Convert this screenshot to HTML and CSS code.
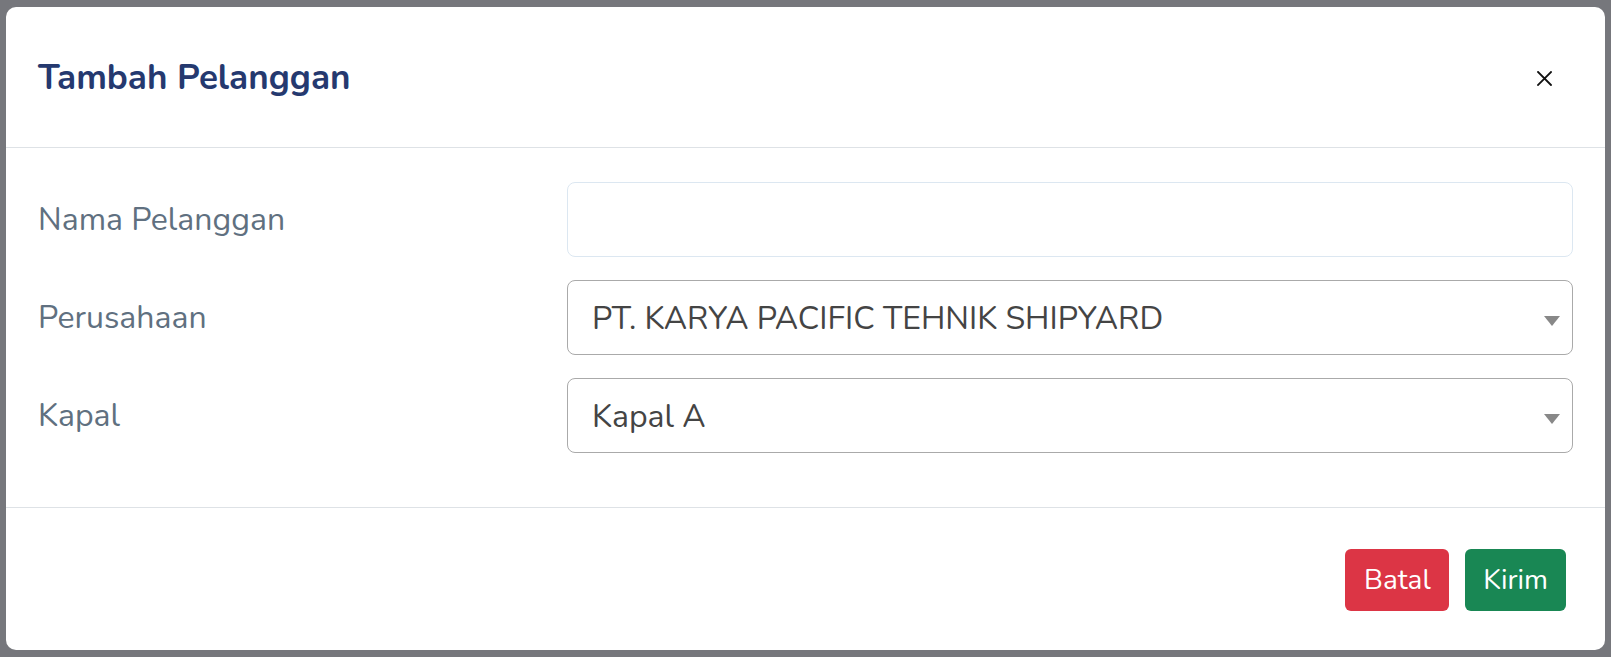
FILE: index.html
```html
<!DOCTYPE html>
<html lang="id">
<head>
<meta charset="utf-8">
<title>Tambah Pelanggan</title>
<link rel="stylesheet" href="styles.css">
</head>
<body>
<div class="modal">
  <div class="modal-header">
    <h5 class="modal-title">Tambah Pelanggan</h5>
    <button class="btn-close" type="button" aria-label="Close">
      <svg width="15" height="15" viewBox="0 0 15 15"><path d="M1 1L14 14M14 1L1 14" stroke="#111" stroke-width="1.8" stroke-linecap="square" fill="none"/></svg>
    </button>
  </div>
  <div class="modal-body">
    <div class="form-row">
      <label class="form-label">Nama Pelanggan</label>
      <div class="form-control"></div>
    </div>
    <div class="form-row">
      <label class="form-label">Perusahaan</label>
      <div class="select">
        <span class="select-text">PT. KARYA PACIFIC TEHNIK SHIPYARD</span>
        <span class="select-arrow"></span>
      </div>
    </div>
    <div class="form-row">
      <label class="form-label">Kapal</label>
      <div class="select">
        <span class="select-text">Kapal A</span>
        <span class="select-arrow"></span>
      </div>
    </div>
  </div>
  <div class="modal-footer">
    <button class="btn btn-danger" type="button">Batal</button>
    <button class="btn btn-success" type="button">Kirim</button>
  </div>
</div>
</body>
</html>
```
FILE: styles.css
```css
* { box-sizing: border-box; }
html, body { margin: 0; height: 100%; }
body {
  background: #76777c;
  padding: 7px 6px 0 6px;
  font-family: "Nunito", "Lato", sans-serif;
}
.modal {
  background: #fff;
  border-radius: 10px;
  width: 100%;
  overflow: hidden;
}
.modal-header {
  height: 141px;
  display: flex;
  align-items: center;
  justify-content: space-between;
  padding: 0 53px 0 32px;
  border-bottom: 1px solid #dee2e6;
}
.modal-title {
  margin: 0;
  font-size: 35px;
  font-weight: 700;
  line-height: 1.2;
  color: #25396f;
  padding-top: 2px;
}
.btn-close {
  border: 0;
  background: transparent;
  padding: 0;
  width: 15px;
  height: 15px;
  display: flex;
  margin-top: 2px;
}
.modal-body {
  padding: 34px 32px 54px 32px;
  border-bottom: 1px solid #dee2e6;
  display: flex;
  flex-direction: column;
  gap: 23px;
}
.form-row {
  display: grid;
  grid-template-columns: 529px 1fr;
  align-items: center;
  height: 75px;
}
.form-label {
  font-size: 32px;
  line-height: 48px;
  color: #607080;
}
.form-control {
  height: 75px;
  border: 1px solid #dce7f1;
  border-radius: 8px;
  background: #fff;
}
.select {
  position: relative;
  height: 75px;
  border: 1px solid #aaa;
  border-radius: 8px;
  background: #fff;
  display: flex;
  align-items: center;
  padding: 2px 0 0 24px;
}
.select-text {
  font-size: 32px;
  color: #444;
  line-height: 48px;
}
.select-arrow {
  position: absolute;
  right: 12px;
  top: calc(50% - 2px);
  width: 0;
  height: 0;
  border-style: solid;
  border-width: 10px 8px 0 8px;
  border-color: #888 transparent transparent transparent;
}
.modal-footer {
  height: 142px;
  display: flex;
  justify-content: flex-end;
  align-items: center;
  gap: 16px;
  padding: 2px 39px 0 0;
}
.btn {
  font-family: "Nunito", "Lato", sans-serif;
  font-size: 28px;
  height: 62px;
  padding: 0 18.5px;
  border: 0;
  border-radius: 6px;
  color: #fff;
  line-height: 62px;
}
.btn-danger { background: #dc3545; }
.btn-success { background: #198754; padding: 0 18px; }
```
